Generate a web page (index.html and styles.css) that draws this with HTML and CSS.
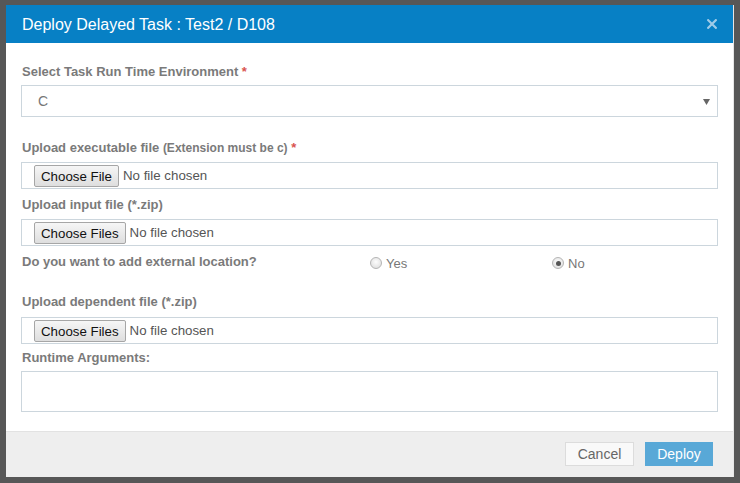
FILE: index.html
```html
<!DOCTYPE html>
<html>
<head>
<meta charset="utf-8">
<link rel="stylesheet" href="styles.css">
</head>
<body>
<div class="modal">
  <div class="modal-header">
    <h4 class="title">Deploy Delayed Task : Test2 / D108</h4>
    <button class="close" aria-label="Close">
      <svg width="10" height="10" viewBox="0 0 10 10"><path d="M1.2 1.2 L8.8 8.8 M8.8 1.2 L1.2 8.8" stroke="#9fcbe8" stroke-width="2.2" stroke-linecap="square"/></svg>
    </button>
  </div>
  <div class="modal-body">
    <label class="lbl lbl-first">Select Task Run Time Environment <span class="req">*</span></label>
    <div class="select">
      <span class="select-val">C</span>
      <svg class="caret" width="7" height="6" viewBox="0 0 7 6"><path d="M0 0 H7 L3.5 6 Z" fill="#666"/></svg>
    </div>

    <label class="lbl lbl-gap">Upload executable file <span class="small">(Extension must be c)</span> <span class="req">*</span></label>
    <div class="file"><span class="file-btn">Choose File</span><span class="file-txt">No file chosen</span></div>

    <label class="lbl lbl-near">Upload input file (*.zip)</label>
    <div class="file"><span class="file-btn">Choose Files</span><span class="file-txt">No file chosen</span></div>

    <div class="radio-row">
      <span class="lbl">Do you want to add external location?</span>
      <span class="radio"><span class="dot"></span>Yes</span>
      <span class="radio"><span class="dot checked"></span>No</span>
    </div>

    <label class="lbl lbl-gap2">Upload dependent file (*.zip)</label>
    <div class="file"><span class="file-btn">Choose Files</span><span class="file-txt">No file chosen</span></div>

    <label class="lbl lbl-rt">Runtime Arguments:</label>
    <div class="textarea"></div>
  </div>
  <div class="modal-footer">
    <button class="btn btn-cancel">Cancel</button>
    <button class="btn btn-deploy">Deploy</button>
  </div>
</div>
</body>
</html>
```
FILE: styles.css
```css
html, body {
  margin: 0;
  padding: 0;
  background: #575757;
  font-family: "Liberation Sans", Arial, sans-serif;
}
body {
  padding: 5px 6px 0 6px;
  height: 483px;
  box-sizing: border-box;
}
.modal {
  width: 728px;
  background: #fff;
  border-right: 1px solid #e6e6e6;
  box-sizing: border-box;
  display: flex;
  flex-direction: column;
}
.modal-header {
  height: 38px;
  background: #0780c5;
  display: flex;
  align-items: center;
  justify-content: space-between;
  padding: 0 16px 0 16px;
  box-sizing: border-box;
}
.title {
  margin: 0;
  color: #fff;
  font-size: 16px;
  font-weight: normal;
  line-height: 20px;
  padding-top: 1px;
}
.close {
  border: 0;
  background: none;
  padding: 0;
  display: flex;
  align-items: center;
  height: 12px;
}
.modal-body {
  padding: 20px 15px 19px 15px;
  display: flex;
  flex-direction: column;
}
.lbl {
  display: block;
  color: #7a7a7a;
  font-weight: bold;
  font-size: 13px;
  line-height: 18px;
  padding-left: 1px;
}
.lbl-first { margin-bottom: 4px; padding-top: 1px; margin-top: -1px; }
.lbl-gap { margin-top: 22px; margin-bottom: 5px; }
.lbl-near { margin-top: 7px; margin-bottom: 5px; }
.lbl-gap2 { margin-top: 22px; margin-bottom: 6px; }
.lbl-rt { margin-top: 5px; margin-bottom: 4px; }
.req { color: #d9534f; }
.small { font-size: 12px; }
.select {
  height: 32px;
  border: 1px solid #ccd6dd;
  box-sizing: border-box;
  display: flex;
  align-items: center;
  justify-content: space-between;
  padding: 0 7px 0 16px;
  color: #777;
  font-size: 14px;
}
.caret { margin-top: 1px; }
.file {
  height: 27px;
  border: 1px solid #ccd6dd;
  box-sizing: border-box;
  display: flex;
  align-items: center;
  padding-left: 12px;
  font-size: 13.3px;
}
.file-btn {
  height: 22px;
  box-sizing: border-box;
  border: 1px solid #a6a6a6;
  border-radius: 2px;
  background: linear-gradient(#f6f6f6, #dedede);
  color: #111;
  padding: 0 6px;
  display: flex;
  align-items: center;
  margin-top: 1px;
}
.file-txt {
  color: #555;
  margin-left: 4px;
}
.radio-row {
  margin-top: 7px;
  display: grid;
  grid-template-columns: 349px 182px 1fr;
  align-items: center;
  height: 18px;
}
.radio {
  display: flex;
  align-items: center;
  color: #777;
  font-size: 13px;
  padding-top: 2px;
}
.dot {
  width: 10px;
  height: 10px;
  border-radius: 50%;
  border: 1px solid #b5b5b5;
  background: radial-gradient(circle at 50% 40%, #fdfdfd, #d9d9d9);
  margin-right: 4px;
  position: relative;
  flex: none;
}
.dot.checked::after {
  content: "";
  position: absolute;
  left: 2.5px;
  top: 2.5px;
  width: 5px;
  height: 5px;
  border-radius: 50%;
  background: #555;
}
.textarea {
  height: 41px;
  border: 1px solid #ccd6dd;
  box-sizing: border-box;
}
.modal-footer {
  border-top: 1px solid #e2e2e2;
  background: #eeeeee;
  height: 46px;
  box-sizing: border-box;
  display: flex;
  justify-content: flex-end;
  align-items: flex-start;
  padding: 10px 20px 0 0;
  gap: 11px;
}
.btn {
  height: 24px;
  font-family: "Liberation Sans", Arial, sans-serif;
  font-size: 14px;
  padding: 0;
  box-sizing: border-box;
  cursor: pointer;
}
.btn-cancel {
  width: 69px;
  background: #f9f9f9;
  border: 1px solid #dcdcdc;
  color: #666;
}
.btn-deploy {
  width: 68px;
  background: #58a8d7;
  border: 1px solid #58a8d7;
  color: #fff;
}
```
